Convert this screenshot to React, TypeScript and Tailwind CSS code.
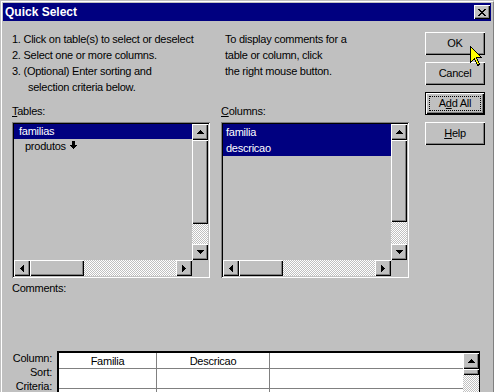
import React from 'react';

const raised =
  'bg-[#c0c0c0] shadow-[inset_1px_1px_#fff,inset_-1px_-1px_#000,inset_-2px_-2px_#808080]';
const dither =
  'bg-[repeating-conic-gradient(#fff_0_25%,#c0c0c0_0_50%)] bg-[length:2px_2px]';

type Dir = 'up' | 'down' | 'left' | 'right';

const arrowPaths: Record<Dir, { w: number; h: number; d: string }> = {
  up: { w: 7, h: 4, d: 'M3 0h1v1h1v1h1v1h1v1H0V3h1V2h1V1h1z' },
  down: { w: 7, h: 4, d: 'M0 0h7v1H6v1H5v1H4v1H3V3H2V2H1V1H0z' },
  left: { w: 4, h: 7, d: 'M3 0h1v7H3V6H2V5H1V4H0V3h1V2h1V1h1z' },
  right: { w: 4, h: 7, d: 'M0 0h1v1h1v1h1v1h1v1H3v1H2v1H1v1H0z' },
};

function ScrollBtn({ dir }: { dir: Dir }) {
  const a = arrowPaths[dir];
  return (
    <div className={`flex h-[16px] w-[16px] shrink-0 items-center justify-center ${raised}`}>
      <svg width={a.w} height={a.h} shapeRendering="crispEdges">
        <path d={a.d} fill="#000" />
      </svg>
    </div>
  );
}

function VScroll({ thumb, gap }: { thumb: number; gap: number }) {
  return (
    <div className="flex w-[16px] flex-col">
      <ScrollBtn dir="up" />
      <div className={raised} style={{ height: thumb }} />
      <div className={dither} style={{ height: gap }} />
      <ScrollBtn dir="down" />
    </div>
  );
}

function HScroll({ thumb, gap }: { thumb: number; gap: number }) {
  return (
    <div className="flex h-[16px]">
      <ScrollBtn dir="left" />
      <div className={raised} style={{ width: thumb }} />
      <div className={dither} style={{ width: gap }} />
      <ScrollBtn dir="right" />
    </div>
  );
}

function ListBox({
  width,
  children,
  vThumb,
  vGap,
  hThumb,
  hGap,
}: {
  width: number;
  children: React.ReactNode;
  vThumb: number;
  vGap: number;
  hThumb: number;
  hGap: number;
}) {
  return (
    <div
      className="h-[156px] p-[2px] shadow-[inset_1px_1px_#808080,inset_-1px_-1px_#fff,inset_2px_2px_#000,inset_-2px_-2px_#c0c0c0]"
      style={{ width }}
    >
      <div className="flex">
        <div className="flex flex-1 flex-col">
          <div className="h-[136px]">{children}</div>
          <HScroll thumb={hThumb} gap={hGap} />
        </div>
        <div className="flex flex-col">
          <VScroll thumb={vThumb} gap={vGap} />
          <div className="h-[16px] w-[16px]" />
        </div>
      </div>
    </div>
  );
}

function Button({ children, isDefault }: { children: React.ReactNode; isDefault?: boolean }) {
  if (isDefault) {
    return (
      <div className="h-[23px] w-[60px] border border-black">
        <div className={`flex h-full w-full items-center justify-center p-[3px] ${raised}`}>
          <div className="flex h-full w-full items-center justify-center border border-dotted border-black">
            {children}
          </div>
        </div>
      </div>
    );
  }
  return (
    <div className={`flex h-[23px] w-[60px] items-center justify-center ${raised}`}>{children}</div>
  );
}

function CloseX() {
  const rows = [
    [0, 1, 6, 7],
    [1, 2, 5, 6],
    [2, 5],
    [3, 4],
    [2, 5],
    [1, 2, 5, 6],
    [0, 1, 6, 7],
  ];
  return (
    <svg width={8} height={7} shapeRendering="crispEdges">
      {rows.map((r, y) =>
        r.length === 4 ? (
          <g key={y}>
            <rect x={r[0]} y={y} width={2} height={1} fill="#000" />
            <rect x={r[2]} y={y} width={2} height={1} fill="#000" />
          </g>
        ) : (
          <rect key={y} x={r[0]} y={y} width={r[1] - r[0] + 1} height={1} fill="#000" />
        )
      )}
    </svg>
  );
}

export default function App() {
  return (
    <div className="relative h-[392px] w-[494px] overflow-hidden bg-[#c0c0c0] pl-px pt-px font-['Liberation_Sans',Arial,sans-serif] text-[11px] tracking-[-0.25px] text-black">
      <div className="h-full border-l border-t border-r border-white border-r-[#808080]">
        {/* title bar */}
        <div className="ml-px mr-[2px] mt-px flex h-[18px] items-center justify-between bg-[#000080] pl-[2px] pr-[1px]">
          <span className="text-[12px] font-bold tracking-normal text-white">Quick Select</span>
          <div className={`flex h-[14px] w-[16px] items-center justify-center ${raised}`}>
            <CloseX />
          </div>
        </div>

        <div className="pl-[10px] pt-[10px]">
          <div className="flex">
            <div className="w-[398px]">
              <div className="flex leading-[16px]">
                <div className="w-[213px]">
                  <div>1. Click on table(s) to select or deselect</div>
                  <div>2. Select one or more columns.</div>
                  <div>3. (Optional) Enter sorting and</div>
                  <div className="pl-[16px]">selection criteria below.</div>
                </div>
                <div>
                  <div>To display comments for a</div>
                  <div>table or column, click</div>
                  <div>the right mouse button.</div>
                </div>
              </div>

              <div className="mt-[8px] flex gap-[11px]">
                <div>
                  <div className="h-[16px] leading-[16px]">
                    <span className="underline">T</span>ables:
                  </div>
                  <div className="mt-[3px]">
                    <ListBox width={198} vThumb={84} vGap={20} hThumb={54} hGap={92}>
                      <div className="h-[15px] bg-[#000080] pl-[5px] leading-[15px] text-white">familias</div>
                      <div className="flex h-[15px] items-center gap-[4px] pl-[11px] leading-[15px]">
                        produtos
                        <svg width={7} height={8} shapeRendering="crispEdges" className="-mt-[4px]">
                          <path d="M2 0h3v4h2v1H6v1H5v1H4v1H3V7H2V6H1V5H0V4h2z" fill="#000" />
                        </svg>
                      </div>
                    </ListBox>
                  </div>
                </div>
                <div>
                  <div className="h-[16px] leading-[16px]">
                    <span className="underline">C</span>olumns:
                  </div>
                  <div className="mt-[3px]">
                    <ListBox width={188} vThumb={82} vGap={22} hThumb={44} hGap={92}>
                      <div className="bg-[#000080] text-white">
                        <div className="h-[16px] pl-[3px] leading-[16px]">familia</div>
                        <div className="h-[16px] pl-[3px] leading-[16px]">descricao</div>
                      </div>
                    </ListBox>
                  </div>
                </div>
              </div>
            </div>

            <div className="ml-[15px] flex flex-col gap-[7px] pt-px">
              <Button>OK</Button>
              <Button>Cancel</Button>
              <Button isDefault>
                A<span className="underline">d</span>d All
              </Button>
              <Button>
                <span className="underline">H</span>elp
              </Button>
            </div>
          </div>

          <div className="mt-[2px] h-[16px] leading-[16px]">Comments:</div>

          <div className="mt-[55px] flex gap-[5px]">
            <div className="w-[40px] text-right leading-[14px]">
              <div>Column:</div>
              <div>Sort:</div>
              <div>Criteria:</div>
            </div>
            <div className="flex h-[80px] w-[423px] border-l-2 border-t-2 border-r border-black bg-white">
              <div className="flex-1">
                <div className="flex h-[16px] border-b border-[#808080]">
                  <div className="w-[98px] border-r border-[#808080] text-center leading-[16px]">Familia</div>
                  <div className="w-[113px] border-r border-[#808080] text-center leading-[16px]">Descricao</div>
                </div>
                <div className="flex h-[20px] border-b border-[#808080]">
                  <div className="w-[98px] border-r border-[#808080]" />
                  <div className="w-[113px] border-r border-[#808080]" />
                </div>
                <div className="flex h-[20px]">
                  <div className="w-[98px] border-r border-[#808080]" />
                  <div className="w-[113px] border-r border-[#808080]" />
                </div>
              </div>
              <div className="flex w-[16px] flex-col">
                <ScrollBtn dir="up" />
                <div className={`h-[6px] ${raised}`} />
                <div className={`flex-1 ${dither}`} />
              </div>
            </div>
          </div>
        </div>
      </div>

      {/* mouse pointer */}
      <svg width={13} height={21} className="absolute left-[470px] top-[46px]" shapeRendering="crispEdges">
        <path d="M0.5 0.5V16.5L4.5 12.5L7.5 19.5L9.5 18.5L6.5 11.5H11.5Z" fill="#ffff00" stroke="#000" strokeWidth={1} />
      </svg>
    </div>
  );
}
